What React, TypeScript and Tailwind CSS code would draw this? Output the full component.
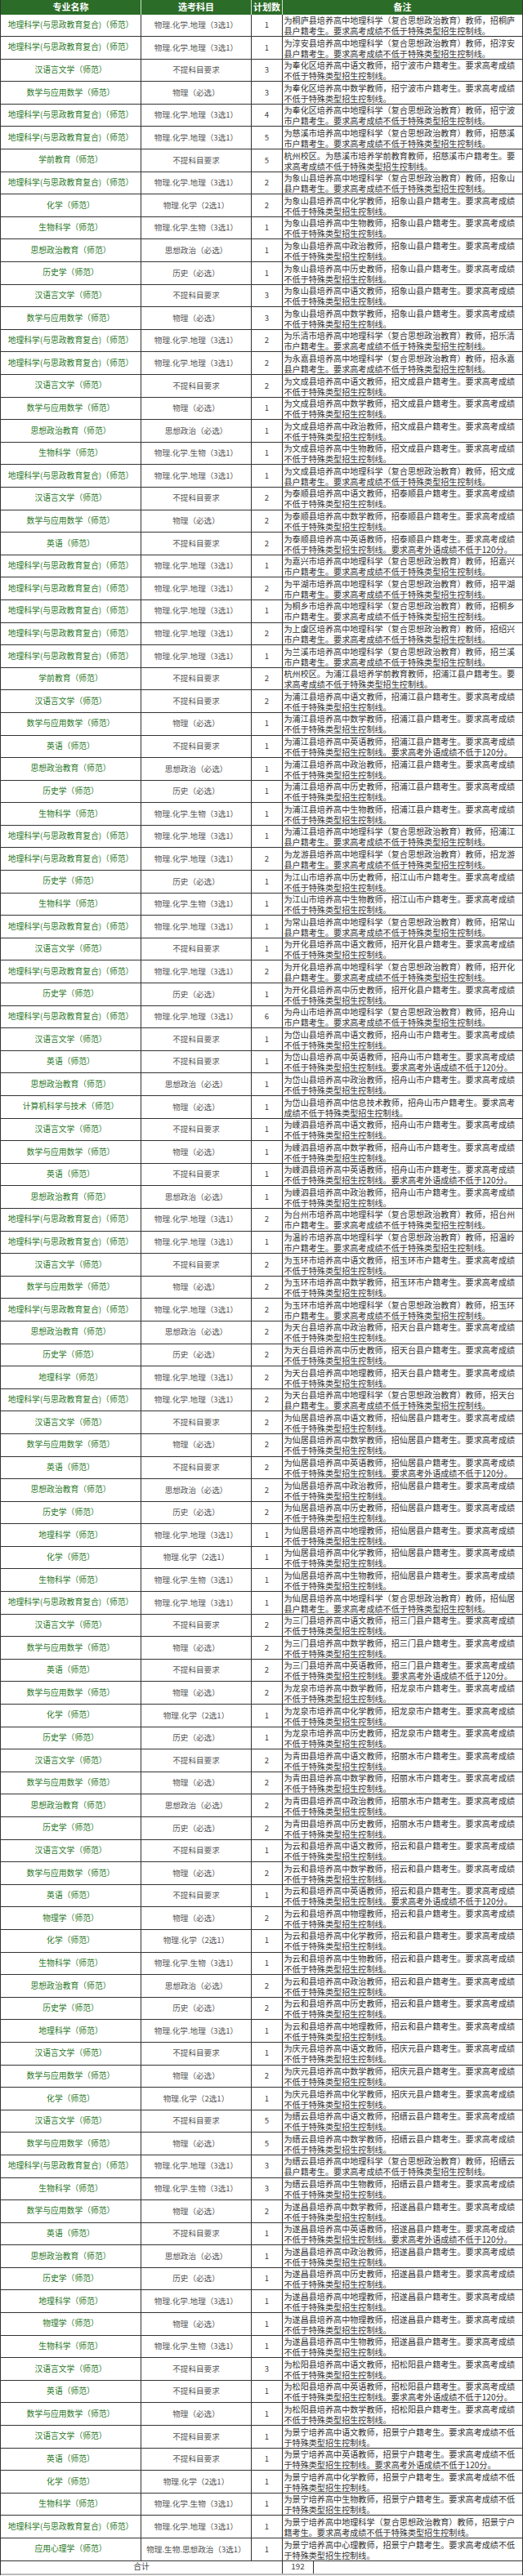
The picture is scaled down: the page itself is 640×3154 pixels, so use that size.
import React from 'react';

type Major = { name: string; subj: string; teach: string };

const M: Record<string, Major> = {
  G: { name: '地理科学(与思政教育复合)（师范）', subj: '物理.化学.地理（3选1）', teach: '地理科学（复合思想政治教育）' },
  H: { name: '汉语言文学（师范）', subj: '不提科目要求', teach: '语文' },
  S: { name: '数学与应用数学（师范）', subj: '物理（必选）', teach: '数学' },
  E: { name: '英语（师范）', subj: '不提科目要求', teach: '英语' },
  Z: { name: '思想政治教育（师范）', subj: '思想政治（必选）', teach: '政治' },
  L: { name: '历史学（师范）', subj: '历史（必选）', teach: '历史' },
  B: { name: '生物科学（师范）', subj: '物理.化学.生物（3选1）', teach: '生物' },
  C: { name: '化学（师范）', subj: '物理.化学（2选1）', teach: '化学' },
  D: { name: '地理科学（师范）', subj: '物理.化学.地理（3选1）', teach: '地理' },
  W: { name: '物理学（师范）', subj: '物理（必选）', teach: '物理' },
  X: { name: '学前教育（师范）', subj: '不提科目要求', teach: '学前教育' },
  J: { name: '计算机科学与技术（师范）', subj: '物理（必选）', teach: '信息技术' },
  P: { name: '应用心理学（师范）', subj: '物理.生物.思想政治（3选1）', teach: '心理' },
};

const RAW: [string, number, string, string?][] = [
  ['G', 1, '桐庐县'],
  ['G', 1, '淳安县'],
  ['H', 3, '奉化区', '宁波市'],
  ['S', 3, '奉化区', '宁波市'],
  ['G', 4, '奉化区', '宁波市'],
  ['G', 5, '慈溪市'],
  ['X', 5, '慈溪市'],
  ['G', 2, '象山县'],
  ['C', 2, '象山县'],
  ['B', 1, '象山县'],
  ['Z', 1, '象山县'],
  ['L', 1, '象山县'],
  ['H', 3, '象山县'],
  ['S', 3, '象山县'],
  ['G', 2, '乐清市'],
  ['G', 2, '永嘉县'],
  ['H', 2, '文成县'],
  ['S', 1, '文成县'],
  ['Z', 1, '文成县'],
  ['B', 1, '文成县'],
  ['G', 1, '文成县'],
  ['H', 2, '泰顺县'],
  ['S', 2, '泰顺县'],
  ['E', 2, '泰顺县'],
  ['G', 1, '嘉兴市'],
  ['G', 2, '平湖市'],
  ['G', 1, '桐乡市'],
  ['G', 2, '上虞区', '绍兴市'],
  ['G', 1, '兰溪市'],
  ['X', 2, '浦江县'],
  ['H', 2, '浦江县'],
  ['S', 1, '浦江县'],
  ['E', 1, '浦江县'],
  ['Z', 1, '浦江县'],
  ['L', 1, '浦江县'],
  ['B', 1, '浦江县'],
  ['G', 1, '浦江县'],
  ['G', 2, '龙游县'],
  ['L', 1, '江山市'],
  ['B', 1, '江山市'],
  ['G', 1, '常山县'],
  ['H', 1, '开化县'],
  ['G', 2, '开化县'],
  ['L', 1, '开化县'],
  ['G', 6, '舟山市'],
  ['H', 1, '岱山县', '舟山市'],
  ['E', 1, '岱山县', '舟山市'],
  ['Z', 1, '岱山县', '舟山市'],
  ['J', 1, '岱山县', '舟山市'],
  ['H', 1, '嵊泗县', '舟山市'],
  ['S', 1, '嵊泗县', '舟山市'],
  ['E', 1, '嵊泗县', '舟山市'],
  ['Z', 1, '嵊泗县', '舟山市'],
  ['G', 2, '台州市'],
  ['G', 1, '温岭市'],
  ['H', 2, '玉环市'],
  ['S', 2, '玉环市'],
  ['G', 2, '玉环市'],
  ['Z', 2, '天台县'],
  ['L', 2, '天台县'],
  ['D', 2, '天台县'],
  ['G', 2, '天台县'],
  ['H', 2, '仙居县'],
  ['S', 2, '仙居县'],
  ['E', 2, '仙居县'],
  ['Z', 2, '仙居县'],
  ['L', 2, '仙居县'],
  ['D', 1, '仙居县'],
  ['C', 1, '仙居县'],
  ['B', 1, '仙居县'],
  ['G', 1, '仙居县'],
  ['H', 2, '三门县'],
  ['S', 2, '三门县'],
  ['E', 2, '三门县'],
  ['S', 2, '龙泉市'],
  ['C', 1, '龙泉市'],
  ['L', 1, '龙泉市'],
  ['H', 2, '青田县', '丽水市'],
  ['S', 2, '青田县', '丽水市'],
  ['Z', 2, '青田县', '丽水市'],
  ['L', 2, '青田县', '丽水市'],
  ['H', 1, '云和县'],
  ['S', 2, '云和县'],
  ['E', 1, '云和县'],
  ['W', 2, '云和县'],
  ['C', 1, '云和县'],
  ['B', 1, '云和县'],
  ['Z', 2, '云和县'],
  ['L', 2, '云和县'],
  ['D', 1, '云和县'],
  ['H', 1, '庆元县'],
  ['S', 2, '庆元县'],
  ['C', 1, '庆元县'],
  ['H', 5, '缙云县'],
  ['S', 5, '缙云县'],
  ['G', 3, '缙云县'],
  ['B', 3, '缙云县'],
  ['S', 2, '遂昌县'],
  ['E', 1, '遂昌县'],
  ['Z', 1, '遂昌县'],
  ['L', 1, '遂昌县'],
  ['D', 1, '遂昌县'],
  ['W', 1, '遂昌县'],
  ['B', 1, '遂昌县'],
  ['H', 3, '松阳县'],
  ['E', 1, '松阳县'],
  ['S', 1, '松阳县'],
  ['H', 1, '景宁'],
  ['E', 1, '景宁'],
  ['C', 1, '景宁'],
  ['B', 1, '景宁'],
  ['G', 1, '景宁'],
  ['P', 1, '景宁'],
];

function note(code: string, place: string, hk: string): string {
  const m = M[code];
  const tail = '要求高考成绩不低于特殊类型招生控制线。';
  if (code === 'X') {
    return `杭州校区。为${place}培养学前教育教师，招${hk}户籍考生。${tail}`;
  }
  let s = `为${place}培养高中${m.teach}教师，招${hk}户籍考生。${tail}`;
  if (code === 'E') s += '要求高考外语成绩不低于120分。';
  return s;
}

const font = "font-['Noto_Sans_CJK_SC','Noto_Sans',sans-serif]";

export default function App() {
  const total = RAW.reduce((a, r) => a + r[1], 0);
  return (
    <div className={`w-[640px] bg-white ${font}`}>
      <div className="w-[640px] border-x border-[#333]">
        <div className="grid h-[17.5px] grid-cols-[172px_135px_38px_1fr] bg-[#2b6d28] text-[11px] font-bold leading-none text-white">
          <div className="flex items-center justify-center border-r border-[#cfe3cc]">专业名称</div>
          <div className="flex items-center justify-center border-r border-[#cfe3cc]">选考科目</div>
          <div className="flex items-center justify-center border-r border-[#cfe3cc]">计划数</div>
          <div className="flex items-center justify-center">备注</div>
        </div>
        {RAW.map(([code, n, place, hk], i) => {
          const m = M[code];
          return (
            <div
              key={i}
              className="grid h-[27.6px] grid-cols-[172px_135px_38px_1fr] border-b border-[#333]"
            >
              <div className="flex items-center justify-center whitespace-nowrap border-r border-[#333] text-[9.8px] leading-none text-[#2e7a2a]">
                {m.name}
              </div>
              <div className="flex items-center justify-center whitespace-nowrap border-r border-[#333] text-[9.6px] leading-none text-[#555]">
                {m.subj}
              </div>
              <div className="flex items-center justify-center border-r border-[#333] text-[9.6px] leading-none text-[#444]">
                {n}
              </div>
              <div className="pl-[1.5px] pt-[0.5px] text-[10.1px] leading-[13px] text-[#333]">
                {note(code, place, hk ?? place)}
              </div>
            </div>
          );
        })}
        <div className="grid h-[17.5px] grid-cols-[345px_38px_1fr] border-b-2 border-[#bbb] text-[9.8px] leading-none text-[#444]">
          <div className="flex items-center justify-center border-r border-[#333]">合计</div>
          <div className="flex items-center justify-center border-r border-[#333]">{total}</div>
          <div></div>
        </div>
      </div>
    </div>
  );
}
